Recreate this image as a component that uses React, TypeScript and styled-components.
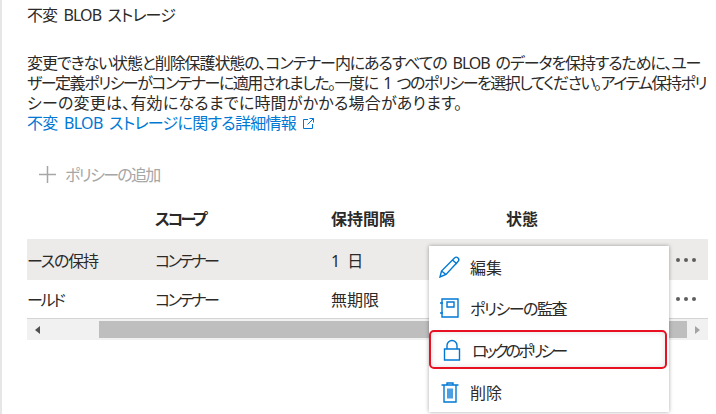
import styled, { createGlobalStyle } from "styled-components";

const GlobalStyle = createGlobalStyle`
  html, body {
    margin: 0;
    padding: 0;
    background: #fff;
  }
  body {
    font-family: "Noto Sans", "Noto Sans CJK JP", sans-serif;
    font-feature-settings: "palt";
    font-size: 16px;
    word-spacing: 3px;
    color: #2b2a29;
  }
`;

const Page = styled.div`
  position: relative;
  width: 716px;
  height: 414px;
  overflow: hidden;
  box-sizing: border-box;
  border-left: 2px solid #e6e6e6;
  padding: 5px 8px 0 25px;
`;

const Title = styled.h1`
  margin: 0;
  height: 20px;
  font-size: 16px;
  line-height: 20px;
  font-weight: 400;
  letter-spacing: -0.9px;
`;

const Description = styled.p`
  margin: 28px 0 0;
  line-height: 20px;
`;

const DescriptionLine = styled.span<{ $track: number }>`
  display: block;
  white-space: nowrap;
  letter-spacing: ${(p) => p.$track}px;
`;

const LearnMore = styled.a`
  display: flex;
  align-items: center;
  gap: 6px;
  line-height: 20px;
  letter-spacing: -0.7px;
  color: #0078d4;
`;

const AddButton = styled.div`
  display: flex;
  align-items: center;
  gap: 8px;
  margin: 30px 0 0 11px;
  height: 22px;
  letter-spacing: -1.7px;
  color: #a6a6a6;
`;

const Columns = "128px 176px 175px 170px 1fr";

const HeaderRow = styled.div`
  display: grid;
  grid-template-columns: ${Columns};
  align-items: center;
  height: 41px;
  box-sizing: border-box;
  padding-bottom: 2px;
  margin-top: 13px;
  font-weight: 700;
`;

const Row = styled.div<{ $selected?: boolean; $height: number }>`
  display: grid;
  grid-template-columns: ${Columns};
  align-items: center;
  height: ${(p) => p.$height}px;
  background: ${(p) => (p.$selected ? "#edebe9" : "#fff")};
`;

// kana in the original font are much narrower than kanji, so kana-heavy labels get tracked in
const Label = styled.span<{ $track?: number }>`
  letter-spacing: ${(p) => p.$track ?? 0}px;
`;

const MoreDots = styled.div`
  grid-column: 5;
  display: flex;
  justify-content: flex-end;
  gap: 4px;
  padding-right: 13px;
`;

const Dot = styled.span`
  width: 4px;
  height: 4px;
  border-radius: 50%;
  background: #605e5c;
`;

const ScrollBar = styled.div`
  display: flex;
  align-items: center;
  height: 22px;
  box-sizing: border-box;
  border-top: 1px solid #d4d4d4;
  background: #f1f1f1;
`;

const ArrowLeft = styled.span`
  width: 0;
  height: 0;
  margin: 0 59px 0 8px;
  border-style: solid;
  border-width: 4px 5px 4px 0;
  border-color: transparent #505050 transparent transparent;
`;

const ArrowRight = styled.span`
  width: 0;
  height: 0;
  margin: 0 8px 0 8px;
  border-style: solid;
  border-width: 4px 0 4px 5px;
  border-color: transparent transparent transparent #a3a3a3;
`;

const Thumb = styled.div`
  flex: 1;
  height: 17px;
  background: #bebebe;
`;

const Menu = styled.div`
  position: absolute;
  left: 427px;
  top: 246px;
  width: 240px;
  height: 166px;
  display: flex;
  flex-direction: column;
  padding-top: 1px;
  box-sizing: border-box;
  background: #fff;
  box-shadow: 0 0 4px rgba(0, 0, 0, 0.35);
`;

const MenuItem = styled.div<{ $highlighted?: boolean }>`
  position: relative;
  flex: 1;
  display: flex;
  align-items: center;
  gap: 9px;
  padding-left: 10px;
  ${(p) =>
    p.$highlighted &&
    `
    margin: 2px 2px 2px 0;
    padding-left: 10px;
    border: 2px solid #e81123;
    border-radius: 5px;
    box-shadow: inset 0 0 6px rgba(0, 0, 0, 0.12);
    flex: 0 0 39px;
    box-sizing: border-box;
  `}
`;

const IconBox = styled.svg`
  width: 22px;
  height: 22px;
  flex: none;
  fill: none;
  stroke: #0078d4;
  stroke-width: 1.4;
`;

export default function App() {
  return (
    <>
      <GlobalStyle />
      <Page>
        <Title>不変 BLOB ストレージ</Title>
        <Description>
          <DescriptionLine $track={-1.1}>
            変更できない状態と削除保護状態の、コンテナー内にあるすべての BLOB のデータを保持するために、ユー
          </DescriptionLine>
          <DescriptionLine $track={-1.5}>
            ザー定義ポリシーがコンテナーに適用されました。一度に 1 つのポリシーを選択してください。アイテム保持ポリ
          </DescriptionLine>
          <DescriptionLine $track={0.2}>
            シーの変更は、有効になるまでに時間がかかる場合があります。
          </DescriptionLine>
        </Description>
        <LearnMore>
          不変 BLOB ストレージに関する詳細情報
          <svg width="13" height="13" viewBox="0 0 13 13" fill="none" stroke="#0078d4" strokeWidth="1">
            <path d="M6 2.500H1.500v9h9V7M7.500 1.500h4v4M11.500 1.500L5.500 7.500" />
          </svg>
        </LearnMore>
        <AddButton>
          <svg width="19" height="19" viewBox="0 0 19 19" stroke="#a6a6a6" strokeWidth="1.5">
            <path d="M9.500 1v17M1 9.500h17" />
          </svg>
          ポリシーの追加
        </AddButton>
        <HeaderRow>
          <span />
          <Label $track={-2.5}>スコープ</Label>
          <span>保持間隔</span>
          <span>状態</span>
        </HeaderRow>
        <Row $selected $height={41}>
          <Label $track={-1.2}>ースの保持</Label>
          <Label $track={-2.5}>コンテナー</Label>
          <span>1 日</span>
          <span />
          <MoreDots><Dot /><Dot /><Dot /></MoreDots>
        </Row>
        <Row $height={38}>
          <Label $track={-2.3}>ールド</Label>
          <Label $track={-2.5}>コンテナー</Label>
          <span>無期限</span>
          <span />
          <MoreDots><Dot /><Dot /><Dot /></MoreDots>
        </Row>
        <ScrollBar>
          <ArrowLeft />
          <Thumb />
          <ArrowRight />
        </ScrollBar>
        <Menu>
          <MenuItem>
            <IconBox viewBox="0 0 22 22">
              <path d="M1 21l1.500-6L15.500 2c1-1 2.500-1 3.500 0s1 2.500 0 3.500L7 18.500zM2.500 15l4.500 3.500M13.500 4l4.500 4" />
            </IconBox>
            編集
          </MenuItem>
          <MenuItem>
            <IconBox viewBox="0 0 22 22">
              <path d="M3 2h16v18H3zM1 6h3M1 16h3M8 5h7v5H8z" />
            </IconBox>
            <Label $track={-1.5}>ポリシーの監査</Label>
          </MenuItem>
          <MenuItem $highlighted>
            <IconBox viewBox="0 0 22 22">
              <path d="M3.500 10h15v11h-15zM6 10V6.500a5 5 0 0 1 10 0V10" />
            </IconBox>
            <Label $track={-3}>ロックのポリシー</Label>
          </MenuItem>
          <MenuItem>
            <IconBox viewBox="0 0 22 22">
              <path d="M2.500 4h17M8 4V2h6v2M5 4v17h12V4M9 7.500v10M11 7.500v10M13 7.500v10" />
            </IconBox>
            削除
          </MenuItem>
        </Menu>
      </Page>
    </>
  );
}
